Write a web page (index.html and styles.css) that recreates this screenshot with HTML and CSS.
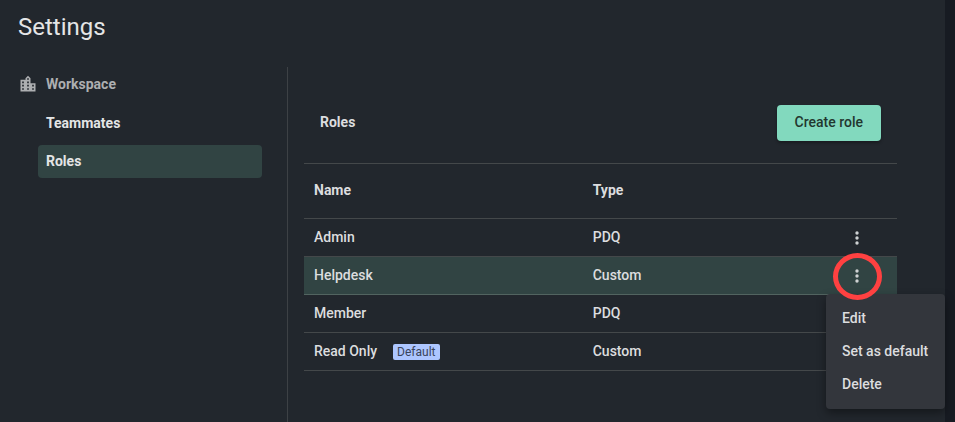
FILE: index.html
```html
<!DOCTYPE html>
<html lang="en">
<head>
<meta charset="utf-8">
<title>Settings</title>
<link rel="stylesheet" href="styles.css">
</head>
<body>
<div class="app">
  <h1 class="title">Settings</h1>
  <div class="layout">
    <nav class="sidebar" aria-label="Settings">
      <div class="group">
        <svg class="group-icon" viewBox="0 0 24 24" aria-hidden="true"><path d="M15 11V5l-3-3-3 3v2H3v14h18V11h-6zm-8 8H5v-2h2v2zm0-4H5v-2h2v2zm0-4H5V9h2v2zm6 8h-2v-2h2v2zm0-4h-2v-2h2v2zm0-4h-2V9h2v2zm0-4h-2V5h2v2zm6 12h-2v-2h2v2zm0-4h-2v-2h2v2z"/></svg>
        <span>Workspace</span>
      </div>
      <a class="link" href="#teammates">Teammates</a>
      <a class="link active" href="#roles" aria-current="page">Roles</a>
    </nav>
    <main class="content">
      <header class="header">
        <h2 class="heading">Roles</h2>
        <button class="create" type="button">Create role</button>
      </header>
      <table class="roles">
        <thead>
          <tr><th class="name" scope="col">Name</th><th scope="col">Type</th><td class="actions"></td></tr>
        </thead>
        <tbody>
          <tr>
            <td>Admin</td><td>PDQ</td>
            <td class="actions"><button class="more" type="button" aria-label="Admin actions"><svg viewBox="0 0 18 18"><circle cx="9" cy="4" r="1.7"/><circle cx="9" cy="9" r="1.7"/><circle cx="9" cy="14" r="1.7"/></svg></button></td>
          </tr>
          <tr class="selected">
            <td>Helpdesk</td><td>Custom</td>
            <td class="actions">
              <button class="more" type="button" aria-label="Helpdesk actions" aria-expanded="true"><svg viewBox="0 0 18 18"><circle cx="9" cy="4" r="1.7"/><circle cx="9" cy="9" r="1.7"/><circle cx="9" cy="14" r="1.7"/></svg></button>
              <div class="menu" role="menu">
                <button class="item" type="button" role="menuitem">Edit</button>
                <button class="item" type="button" role="menuitem">Set as default</button>
                <button class="item" type="button" role="menuitem">Delete</button>
              </div>
              <span class="marker"></span>
            </td>
          </tr>
          <tr><td>Member</td><td>PDQ</td><td class="actions"></td></tr>
          <tr><td>Read Only<span class="badge">Default</span></td><td>Custom</td><td class="actions"></td></tr>
        </tbody>
      </table>
    </main>
  </div>
</div>
</body>
</html>
```
FILE: styles.css
```css
* { box-sizing: border-box; }

body {
  margin: 0;
  background: #22272d;
  color: #dcdddf;
  font: 500 14px/20px Roboto, sans-serif;
}

button { font: inherit; color: inherit; border: 0; cursor: pointer; }

.app {
  display: flex;
  flex-direction: column;
  min-height: 100vh;
  border-right: 10px solid #171b22;
}

.title {
  margin: 0;
  padding: 11px 18px 24px;
  font-size: 24px;
  font-weight: 400;
  line-height: 32px;
  color: #e4e5e6;
}

.layout { display: flex; flex: 1; }

.sidebar {
  display: flex;
  flex-direction: column;
  gap: 5px;
  width: 287px;
  padding: 0 25px 0 18px;
}

.group {
  display: flex;
  align-items: center;
  gap: 8px;
  height: 35px;
  padding-bottom: 2px;
  font-weight: 700;
  color: #adafb1;
}

.group-icon { width: 20px; height: 20px; fill: currentColor; }

.link {
  margin-left: 20px;
  padding: 6px 8px 7px;
  border-radius: 4px;
  font-weight: 700;
  color: #e4e5e6;
  text-decoration: none;
}

.active { background: #314443; }

.content {
  flex: 1;
  padding: 0 48px 0 16px;
  border-left: 1px solid #3d4145;
}

.header {
  display: flex;
  align-items: center;
  justify-content: space-between;
  padding: 38px 16px 22px;
}

.heading {
  margin: 0;
  padding-bottom: 2px;
  font-size: 14px;
  font-weight: 700;
  line-height: 20px;
}

.create {
  height: 36px;
  padding: 0 18px 2px;
  border-radius: 4px;
  background: #82d9be;
  color: #22372f;
  box-shadow: 0 2px 3px rgba(0, 0, 0, 0.3);
}

.roles {
  width: 100%;
  table-layout: fixed;
  border-spacing: 0;
  border-top: 1px solid #44484a;
}

.roles th, .roles td {
  height: 38px;
  padding: 0 10px 2px;
  border-bottom: 1px solid #44484a;
  text-align: left;
}

.roles thead th, .roles thead td { height: 55px; font-weight: 700; }
.roles .name { width: 47%; }

.roles .actions { position: relative; width: 80px; padding-bottom: 0; }

.roles .selected td { background: #314443; border-bottom-color: #526460; }

.more {
  display: block;
  width: 24px;
  height: 24px;
  margin: 0 auto;
  padding: 3px;
  background: none;
}

.more svg { display: block; fill: #cfd2d3; }

.badge {
  display: inline-block;
  margin-left: 16px;
  padding: 0 4px;
  border-radius: 2px;
  background: #adc6ff;
  color: #39445c;
  font-size: 12px;
  font-weight: 400;
  line-height: 16px;
}

.menu {
  position: absolute;
  top: 37px;
  right: -48px;
  z-index: 1;
  display: flex;
  flex-direction: column;
  min-width: 119px;
  padding: 8px 0;
  border-radius: 4px;
  background: #33363c;
  box-shadow: 0 4px 10px rgba(0, 0, 0, 0.4);
}

.item {
  height: 33px;
  padding: 0 16px 2px;
  background: none;
  text-align: left;
  white-space: nowrap;
}

.marker {
  position: absolute;
  top: -4px;
  left: 16px;
  z-index: 2;
  width: 49px;
  height: 47px;
  border: 5px solid #ff4141;
  border-radius: 50%;
  pointer-events: none;
}
```
